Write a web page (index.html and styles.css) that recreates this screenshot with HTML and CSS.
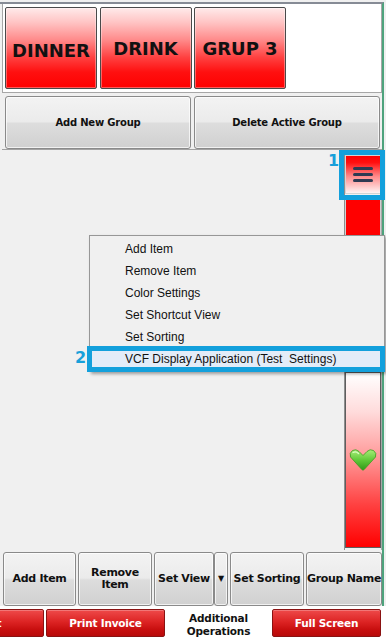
FILE: index.html
```html
<!DOCTYPE html>
<html>
<head>
<meta charset="utf-8">
<link rel="stylesheet" href="styles.css">
</head>
<body>
<div class="app">
  <div class="frame">
    <div class="groups">
      <div class="grp grp-low">DINNER</div>
      <div class="grp">DRINK</div>
      <div class="grp">GRUP 3</div>
    </div>
    <div class="group-actions">
      <div class="gbtn">Add New Group</div>
      <div class="gbtn">Delete Active Group</div>
    </div>
    <div class="main">
      <div class="canvas"></div>
      <div class="scroll">
        <div class="sb-up">
          <svg width="20" height="15" viewBox="0 0 20 15"><g stroke="#2f3a52" stroke-width="3" stroke-linecap="round"><line x1="1.5" y1="1.5" x2="18.5" y2="1.5"/><line x1="1.5" y1="7.5" x2="18.5" y2="7.5"/><line x1="1.5" y1="13.5" x2="18.5" y2="13.5"/></g></svg>
        </div>
        <div class="sb-thumb"></div>
        <div class="sb-down">
          <svg width="30" height="24" viewBox="0 0 30 24">
            <defs><linearGradient id="gg" x1="0" y1="0" x2="0" y2="1"><stop offset="0" stop-color="#a8ee78"/><stop offset="0.5" stop-color="#62c93a"/><stop offset="1" stop-color="#2f9a18"/></linearGradient></defs>
            <path d="M2.5 9 Q1 5 4.5 2.5 Q8 0.5 11 3.5 L15 7.5 L19 3.5 Q22 0.5 25.5 2.5 Q29 5 27.5 9 L16.2 21.5 Q15 22.8 13.8 21.5 Z" fill="url(#gg)" stroke="#3d9a22" stroke-width="0.8"/>
            <path d="M5 4.5 Q8 3 10.5 5.5" stroke="#d8ffc0" stroke-width="1.2" fill="none" stroke-linecap="round"/>
          </svg>
        </div>
      </div>
      <div class="mark mark1"></div>
      <div class="label label1">1</div>
      <div class="menu">
        <div class="mi">Add Item</div>
        <div class="mi">Remove Item</div>
        <div class="mi">Color Settings</div>
        <div class="mi">Set Shortcut View</div>
        <div class="mi">Set Sorting</div>
        <div class="mi mi-hot">VCF Display Application (Test&nbsp; Settings)</div>
      </div>
      <div class="mark mark2"></div>
      <div class="label label2">2</div>
    </div>
    <div class="actions">
      <div class="abtn w73">Add Item</div>
      <div class="abtn w74">Remove<br>Item</div>
      <div class="split">
        <div class="abtn split-main">Set View</div>
        <div class="abtn split-arrow">&#9660;</div>
      </div>
      <div class="abtn w74">Set Sorting</div>
      <div class="abtn w76">Group Name</div>
    </div>
  </div>
  <div class="tabs">
    <div class="rbtn r-left">Exit</div>
    <div class="rbtn r-print">Print Invoice</div>
    <div class="tab-text">Additional<br>Operations</div>
    <div class="rbtn r-full">Full Screen</div>
  </div>
</div>
</body>
</html>
```

FILE: styles.css
```css
* { box-sizing: border-box; }
body {
  margin: 0;
  width: 386px;
  height: 640px;
  overflow: hidden;
  background: #f0f0f0;
  font-family: "DejaVu Sans", sans-serif;
}
.app {
  padding-top: 2px;
  height: 640px;
  display: flex;
  flex-direction: column;
}
.frame {
  width: 384px;
  height: 604px;
  border-top: 2px solid #868b95;
  border-right: 2px solid #4ea37d;
  padding-left: 2px;
  display: flex;
  flex-direction: column;
  background: #f0f0f0;
}
.groups {
  height: 89px;
  flex: none;
  background: #fff;
  border: 1px solid #a7a7a7;
  border-top: none;
  padding: 3px 0 3px 2px;
  display: flex;
  gap: 2.5px;
}
.grp {
  width: 92px;
  height: 82px;
  border: 1px solid #4a4a4a;
  border-radius: 2px;
  background: linear-gradient(#ffeaea 0%, #ffc4c4 18%, #ff8a8a 40%, #ff4040 62%, #ff1010 80%, #ff0000 100%);
  display: flex;
  align-items: center;
  justify-content: center;
  font-weight: bold;
  font-size: 18px;
  color: #111;
  box-shadow: inset 0 0 0 1px rgba(255,255,255,0.35);
}
.grp-low { padding-top: 4px; }
.group-actions {
  height: 56px;
  flex: none;
  padding: 3px 2px 0 3px;
  display: flex;
  gap: 3px;
}
.gbtn {
  flex: 1;
  height: 53px;
  border: 1px solid #8a8a8a;
  border-radius: 3px;
  background: linear-gradient(#f3f3f3 0%, #ebebeb 48%, #dddddd 52%, #d0d0d0 100%);
  box-shadow: inset 0 0 0 1px rgba(255,255,255,0.7);
  display: flex;
  align-items: center;
  justify-content: center;
  font-weight: bold;
  font-size: 10px;
  letter-spacing: -0.2px;
  color: #111;
}
.main {
  position: relative;
  height: 401px;
  flex: none;
  border-top: 1px solid #a3a3a3;
  display: flex;
}
.canvas { flex: 1; }
.scroll {
  width: 38px;
  display: flex;
  flex-direction: column;
  border-left: 1px solid #8e8e8e;
  border-right: 1px solid #a8a8a8;
  padding: 5px 0 2px;
  gap: 2px;
}
.sb-up {
  height: 39px;
  flex: none;
  border: 1px solid #d4d4d4;
  background: linear-gradient(#ff0000 0%, #ff1010 18%, #ff8a8a 55%, #fff4f4 100%);
  display: flex;
  align-items: center;
  justify-content: center;
}
.sb-thumb {
  flex: 1;
  background: #ff0000;
  border: 1px solid #d0d0d0;
}
.sb-down {
  height: 176px;
  flex: none;
  border: 1px solid #5e5e5e;
  background: linear-gradient(#ffffff 0%, #ffdcdc 22%, #ff9a9a 48%, #ff4040 76%, #ff0000 100%);
  display: flex;
  align-items: center;
  justify-content: center;
}
.mark {
  position: absolute;
  border: 5px solid #13a0dc;
}
.mark1 { left: 337px; top: 0; width: 46px; height: 50px; }
.mark2 { left: 85px; top: 196px; width: 298px; height: 26px; }
.label {
  position: absolute;
  font-weight: bold;
  font-size: 16px;
  line-height: 16px;
  color: #17a0da;
}
.label1 { left: 326px; top: 3px; }
.label2 { left: 73px; top: 200px; }
.menu {
  position: absolute;
  left: 87px;
  top: 85px;
  width: 296px;
  height: 137px;
  background: #f0f0f0;
  border: 1px solid #979797;
  padding: 2px 2px 1px;
  box-shadow: 2px 2px 3px rgba(0,0,0,0.35);
  font-family: "Liberation Sans", Arial, sans-serif;
  font-size: 12px;
  color: #111;
}
.mi {
  height: 22px;
  line-height: 22px;
  padding-left: 33px;
  white-space: nowrap;
}
.mi-hot { background: #e3ecf8; }
.actions {
  height: 56px;
  flex: none;
  padding: 2px 0 0 1px;
  display: flex;
  gap: 2px;
}
.abtn {
  height: 54px;
  border: 1px solid #8a8a8a;
  border-radius: 3px;
  background: linear-gradient(#f3f3f3 0%, #ebebeb 48%, #dddddd 52%, #d0d0d0 100%);
  box-shadow: inset 0 0 0 1px rgba(255,255,255,0.7);
  display: flex;
  align-items: center;
  justify-content: center;
  text-align: center;
  font-weight: bold;
  font-size: 11px;
  line-height: 12px;
  letter-spacing: -0.3px;
  color: #111;
  white-space: nowrap;
}
.w73 { width: 73px; }
.w74 { width: 74px; }
.w76 { width: 76px; }
.split { width: 74px; display: flex; }
.split-main { width: 60px; }
.split-arrow { width: 14px; font-size: 8px; letter-spacing: 0; }
.tabs {
  flex: 1;
  background: #ffffff;
  padding-top: 3px;
  display: flex;
  gap: 2px;
}
.rbtn {
  height: 28px;
  border: 1px solid #8a1212;
  border-radius: 2px;
  background: linear-gradient(#ee4a4a 0%, #dd2424 45%, #c80f0f 75%, #b80a0a 100%);
  box-shadow: inset 0 1px 0 rgba(255,255,255,0.25);
  display: flex;
  align-items: center;
  justify-content: center;
  color: #fff;
  font-weight: bold;
  font-size: 10.5px;
  letter-spacing: -0.2px;
  white-space: nowrap;
}
.r-left { width: 107px; margin-left: -63px; flex: none; }
.r-print { width: 119px; flex: none; }
.r-full { width: 109px; flex: none; }
.tab-text {
  width: 103px;
  flex: none;
  height: 31px;
  display: flex;
  align-items: center;
  justify-content: center;
  text-align: center;
  font-weight: bold;
  font-size: 10.5px;
  line-height: 13px;
  letter-spacing: -0.2px;
  color: #111;
}
```
